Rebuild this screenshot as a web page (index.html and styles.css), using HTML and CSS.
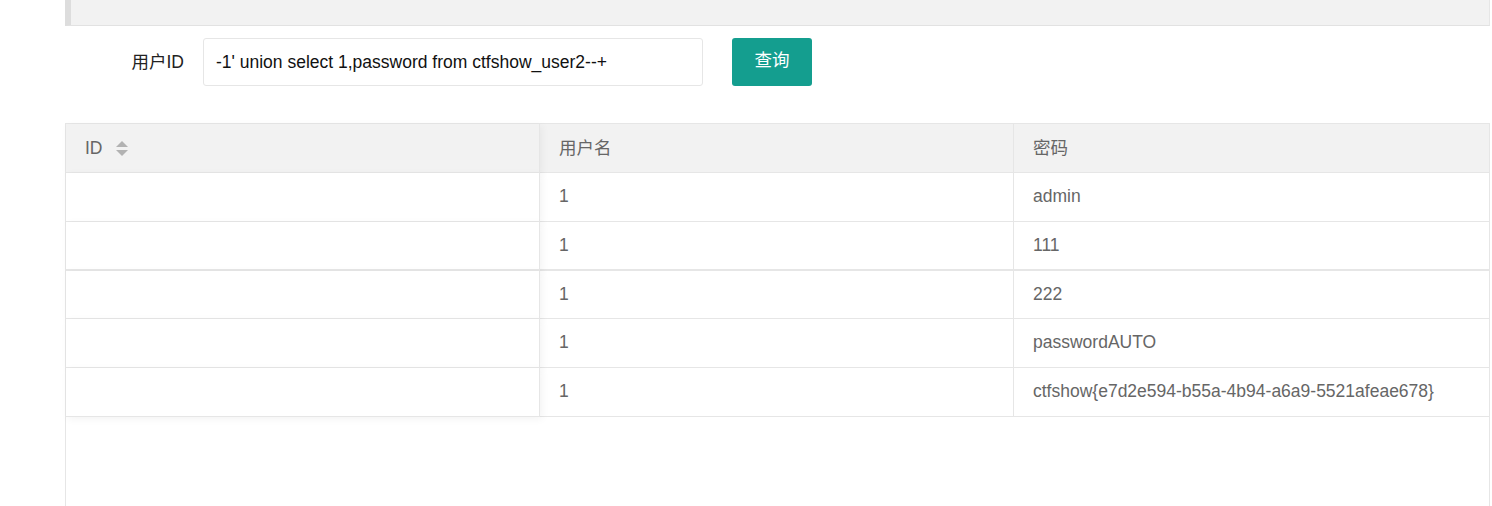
FILE: index.html
```html
<!DOCTYPE html>
<html lang="zh-CN">
<head>
<meta charset="utf-8">
<title>查询</title>
<link rel="stylesheet" href="styles.css">
</head>
<body>
<div class="page">
  <div class="quote"></div>
  <form class="search">
    <label class="search-label">用户ID</label>
    <input class="search-input" type="text" value="-1' union select 1,password from ctfshow_user2--+">
    <button class="search-btn" type="button">查询</button>
  </form>
  <div class="table">
    <div class="cell head fixed">ID <span class="sort"><i class="up"></i><i class="down"></i></span></div>
    <div class="cell head cjk">用户名</div>
    <div class="cell head cjk last">密码</div>

    <div class="cell fixed"></div>
    <div class="cell">1</div>
    <div class="cell last">admin</div>

    <div class="cell fixed thick"></div>
    <div class="cell thick">1</div>
    <div class="cell last thick">111</div>

    <div class="cell fixed"></div>
    <div class="cell">1</div>
    <div class="cell last">222</div>

    <div class="cell fixed"></div>
    <div class="cell">1</div>
    <div class="cell last">passwordAUTO</div>

    <div class="cell fixed"></div>
    <div class="cell">1</div>
    <div class="cell last">ctfshow{e7d2e594-b55a-4b94-a6a9-5521afeae678}</div>
  </div>
</div>
</body>
</html>
```

FILE: styles.css
```css
html, body {
  margin: 0;
  padding: 0;
  background: #fff;
  font-family: "Liberation Sans", Arial, "Noto Sans CJK SC", sans-serif;
  font-size: 17.5px;
  color: #666;
  overflow: hidden;
}

.page {
  margin-left: 65px;
  width: 1425px;
}

.quote {
  height: 25px;
  background: #f2f2f2;
  border-left: 6px solid #dddddd;
  border-right: 1px solid #e6e6e6;
  border-bottom: 1px solid #e2e2e2;
}

.search {
  display: flex;
  align-items: center;
  margin: 12px 0 0 0;
  height: 48px;
}

.search-label {
  box-sizing: border-box;
  width: 138px;
  padding: 0 19px 3px 0;
  text-align: right;
  color: #222;
  font-size: 17.5px;
}

.search-input {
  box-sizing: border-box;
  width: 500px;
  height: 48px;
  border: 1px solid #e6e6e6;
  border-radius: 3px;
  padding: 0 12px;
  font-family: "Liberation Sans", Arial, sans-serif;
  font-size: 17.5px;
  color: #111;
  outline: none;
}

.search-btn {
  box-sizing: border-box;
  margin-left: 29px;
  width: 80px;
  height: 48px;
  border: none;
  border-radius: 3px;
  background: #149e8f;
  color: #fff;
  font-family: "Noto Sans CJK SC", sans-serif;
  font-size: 17.5px;
  line-height: 1;
  padding: 0 0 7px 0;
}

.table {
  margin-top: 37px;
  height: 400px;
  border: 1px solid #e6e6e6;
  display: grid;
  grid-template-columns: 474px 474px 1fr;
  grid-template-rows: 49px 49px 49px 48px 49px 49px;
  align-content: start;
}

.cell {
  box-sizing: border-box;
  display: flex;
  align-items: center;
  padding-left: 19px;
  padding-bottom: 1px;
  border-right: 1px solid #e6e6e6;
  border-bottom: 1px solid #e6e6e6;
  background: #fff;
  color: #666;
  white-space: nowrap;
}

.cell.last {
  border-right: none;
}

.cell.head {
  background: #f2f2f2;
  color: #666;
  padding-bottom: 0;
}

.cell.head.cjk {
  padding-bottom: 3px;
}

.cell.thick {
  border-bottom-width: 2px;
}

.cell.fixed {
  position: relative;
  z-index: 1;
  box-shadow: 2px 2px 8px rgba(0, 0, 0, 0.05);
}

.sort {
  display: inline-flex;
  flex-direction: column;
  gap: 3px;
  margin-left: 13px;
  margin-top: 1px;
}

.sort i {
  display: block;
  width: 0;
  height: 0;
  border-left: 6.5px solid transparent;
  border-right: 6.5px solid transparent;
}

.sort .up {
  border-bottom: 6.5px solid #b2b2b2;
}

.sort .down {
  border-top: 6.5px solid #b2b2b2;
}
```
